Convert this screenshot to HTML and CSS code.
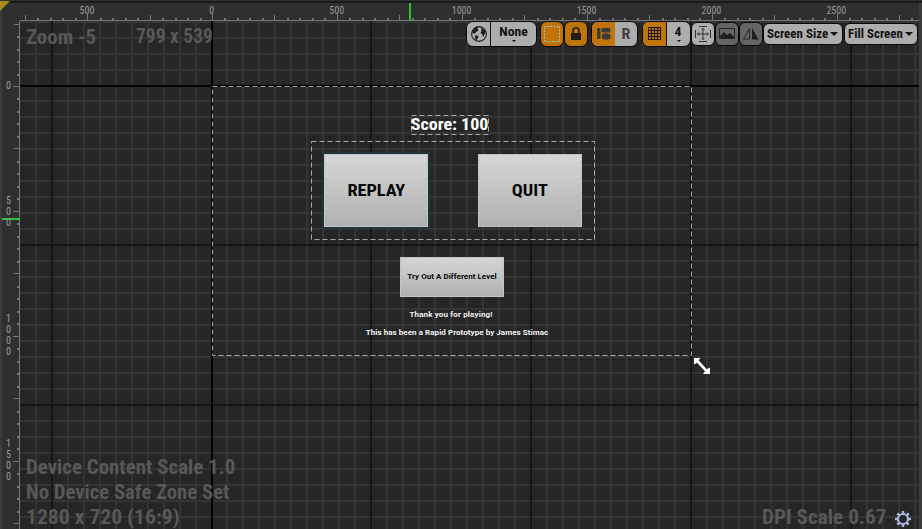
FILE: index.html
```html
<!DOCTYPE html>
<html lang="en">
<head>
<meta charset="utf-8">
<title>Widget Designer</title>
<link rel="stylesheet" href="styles.css">
</head>
<body>
<main class="designer">
  <svg class="surface" width="922" height="529" aria-hidden="true">
    <rect class="ground" width="922" height="529"/>
    <path class="cell-line" id="cells"/>
    <path class="block-line" id="blocks"/>
    <path class="origin" d="M211 21h2v508h-2zM20 85h902v2H20z"/>
    <path class="ruler" d="M0 0h922v20H20v509H0z"/>
    <path class="ruler-edge" d="M0 1h922v2H0z"/>
    <path class="ruler-side" d="M0 3h2v526H0z"/>
    <path class="tick" id="ticks"/>
    <path class="ruler-line" d="M20 20h899v1H20zM19 21h1v508h-1z"/>
    <path class="ruler-side" d="M919 3h3v526h-3z"/>
    <path class="corner" d="M0 1h10L0 11z"/>
    <path class="marker" d="M409 3h2v18h-2zM2 218h18v2H2z"/>
    <g class="outline">
      <rect x="212.5" y="86.5" width="479" height="269"/>
      <rect x="311.5" y="141.5" width="283" height="98"/>
      <rect x="411.5" y="115.5" width="77" height="19"/>
    </g>
  </svg>

  <div class="ruler-labels-x"><span>500</span><span>0</span><span>500</span><span>1000</span><span>1500</span><span>2000</span><span>2500</span></div>
  <div class="ruler-labels-y"><span>0</span><span>5<br>0<br>0</span><span>1<br>0<br>0<br>0</span><span>1<br>5<br>0<br>0</span></div>

  <div class="hud hud-zoom">Zoom -5</div>
  <div class="hud hud-pointer">799 x 539</div>
  <div class="hud hud-device"><div class="content-scale">Device Content Scale 1.0</div><div class="safe-zone">No Device Safe Zone Set</div><div class="resolution">1280 x 720 (16:9)</div></div>
  <div class="hud hud-dpi">DPI Scale 0.67</div>
  <svg class="gear" width="18" height="18" viewBox="-9 -9 18 18"><path class="teeth" d="M0-8V8M-8 0H8M-5.700-5.700 5.700 5.700M5.700-5.700-5.700 5.700"/><circle class="gear-body" r="5"/></svg>

  <nav class="toolbar">
    <div class="group locale">
      <button class="icon"><svg width="18" height="18" viewBox="0 0 18 18"><circle cx="9" cy="9" r="7.400" fill="#b0b0b0" stroke="#1c1c1c" stroke-width="1.100"/><path fill="#1c1c1c" d="M2.500 6 5 3 8.500 2 7.500 4 8.500 5.500 6 7 4.500 9 2.500 8zM5.500 10l3 1-.8 2.500L6 15.500 5 13zM11 3l3.500 2 1.300 3-1.500 1.500-1 3-1.300-3.500-1.500-1 1-2z"/></svg></button>
      <button class="pick"><span>None</span><i></i></button>
    </div>
    <button class="single on outline-btn"><svg width="18" height="18"><path d="M1.500 1.500h15v15h-15z" fill="none" stroke="#6e5420"/><path d="M1.500 1.500h15v15h-15z" fill="none" stroke="#d0c8a8" stroke-dasharray="2 1"/></svg></button>
    <button class="single on lock-btn"><svg width="14" height="16" viewBox="0 0 14 16"><path d="M4 8V5a3 3 0 0 1 6 0v3" fill="none" stroke="#201c14" stroke-width="1.600"/><path d="M2 7h10v7H2z" fill="#201c14"/></svg></button>
    <div class="group layout">
      <button class="icon on"><svg width="16" height="14" viewBox="0 0 16 14"><rect x="1" y="1" width="3.500" height="11" rx="1" fill="#3b3b38"/><rect x="5.500" y="1" width="9" height="4.500" rx="1.500" fill="#3b3b38"/><rect x="6" y="6.500" width="8.500" height="6" rx="2" fill="#3b3b38"/></svg></button>
      <button class="letter"><span>R</span></button>
    </div>
    <div class="group snap">
      <button class="icon on"><svg width="14" height="14"><path d="M.5.5h12v12H.5zM3.500.5v12M6.500.5v12M9.500.5v12M.5 3.500h12M.5 6.500h12M.5 9.500h12" fill="none" stroke="#17130a"/></svg></button>
      <button class="pick"><span>4</span><i></i></button>
    </div>
    <button class="small fit"><svg width="18" height="18" viewBox="0 0 18 18"><path d="M5 1.500h8M5 16.500h8M1.500 5v8M16.500 5v8M9 3.500v11M3.500 9h11M7.500 5 9 3.500 10.500 5M7.500 13 9 14.500l1.500-1.500M5 7.500 3.500 9 5 10.500M13 7.500 14.500 9 13 10.500" fill="none" stroke="#333"/></svg></button>
    <button class="small dim"><svg width="18" height="14" viewBox="0 0 18 14"><path d="M1.500 1.500h15v10h-15z" fill="none" stroke="#252525"/><path d="M2 11V9l4-4 3 3 3-2 4 4v1z" fill="#1d1d1d"/></svg></button>
    <button class="small dim"><svg width="18" height="14" viewBox="0 0 18 14"><path d="M7.500 1.500V12H1.500z" fill="none" stroke="#252525"/><path d="M10 1v11.500h6.500z" fill="#1d1d1d"/></svg></button>
    <button class="drop size"><span>Screen Size</span><i></i></button>
    <button class="drop fill"><span>Fill Screen</span><i></i></button>
  </nav>

  <section class="widget">
    <p class="score"><span>Score: 100</span></p>
    <div class="choices">
      <button class="tile selected"><span>REPLAY</span></button>
      <button class="tile"><span>QUIT</span></button>
    </div>
    <button class="tile level">Try Out A Different Level</button>
    <p class="note thanks">Thank you for playing!</p>
    <p class="note credit">This has been a Rapid Prototype by James Stimac</p>
  </section>
  <svg class="resize" width="18" height="18" viewBox="0 0 18 18"><path fill="#fff" d="M1 1h6.500L5.700 3.300 13.700 12.200 17 10.500v6.500h-7l2-2.700L4 5.800 1 7.500z"/></svg>
</main>
<script src="grid.js"></script>
</body>
</html>
```
FILE: grid.js
```js
// Draws the canvas grid and the ruler ticks on whole pixels.
const cells = [], blocks = [], ticks = [];
for (let k = -12; k <= 44; k++) {
  const x = Math.floor(212 + k * 15.98) - 1;
  const y = Math.floor(86 + k * 15.98) - 1;
  const list = k % 10 === 0 ? blocks : cells;
  if (x > 19 && x < 919) list.push(`M${x} 21h2v508h-2z`);
  if (y > 20 && y < 529) list.push(`M20 ${y}h899v2H20z`);
}
for (let k = -15; k <= 56; k++) {
  const x = Math.round(212 + k * 12.49);
  const y = Math.round(86 + k * 12.49);
  const size = k % 10 === 0 ? 6 : k % 5 === 0 ? 5 : 2;
  const thick = size === 2 ? 2 : 1;
  if (x > 22 && x < 917) ticks.push(`M${x} ${20 - size}h${thick}v${size}h-${thick}z`);
  if (y > 22 && y < 529) ticks.push(`M${19 - size} ${y}h${size}v${thick}h-${size}z`);
}
document.getElementById('cells').setAttribute('d', cells.join(''));
document.getElementById('blocks').setAttribute('d', blocks.join(''));
document.getElementById('ticks').setAttribute('d', ticks.join(''));
```
FILE: styles.css
```css
* { box-sizing: border-box; }
body { margin: 0; background: #262626; overflow: hidden; }
p { margin: 0; }
button { display: flex; align-items: center; justify-content: center; padding: 0; border: 0; font: inherit; color: inherit; background: none; }
svg { display: block; flex: none; }
.designer { position: relative; width: 922px; height: 529px; font-family: Roboto, "Liberation Sans", sans-serif; font-stretch: 75%; }
.surface { position: absolute; inset: 0; }
.ground { fill: #262626; }
.cell-line { fill: #343434; }
.block-line { fill: #161616; }
.origin { fill: #000; }
.ruler { fill: #2f2f2f; }
.ruler-edge { fill: #1b1b1b; }
.ruler-side { fill: #3c3c3c; }
.ruler-line, .tick { fill: #747474; }
.corner { fill: #a88a1c; }
.marker { fill: #2fbf35; }
.outline { fill: none; stroke: #a8a8a8; stroke-width: 1; stroke-dasharray: 5 3; }

.ruler-labels-x { position: absolute; top: 5px; left: 24.500px; display: grid; grid-template-columns: repeat(7, 124.900px); text-align: center; font-size: 10px; line-height: 12px; color: #999; }
.ruler-labels-y { position: absolute; top: 80px; left: 4px; width: 9px; display: grid; grid-template-rows: 115px 118px 125px auto; font-size: 10px; line-height: 11px; text-align: center; color: #999; }

.hud { position: absolute; font-size: 20px; line-height: 25px; font-weight: 700; color: #585858; white-space: nowrap; transform-origin: left; }
.hud-zoom { left: 26px; top: 25px; transform: scaleX(1.045); }
.hud-pointer { right: 709px; top: 24px; transform-origin: right; transform: scaleX(.975); }
.hud-device { left: 26px; top: 455px; }
.hud-device div { transform-origin: left; }
.content-scale { transform: scaleX(1.045); }
.safe-zone { transform: scaleX(1.035); }
.resolution { transform: scaleX(1.080); }
.hud-dpi { right: 36px; top: 505px; transform-origin: right; transform: scaleX(1.060); }
.gear { position: absolute; left: 894px; top: 510px; }
.teeth { stroke: #a9b5dc; stroke-width: 2.500; }
.gear-body { fill: #262626; stroke: #a9b5dc; stroke-width: 2.200; }

.toolbar { position: absolute; top: 21px; left: 466px; width: 454px; height: 26px; display: flex; align-items: center; color: #111; font-weight: 700; font-size: 12px; }
.group, .single, .small, .drop { border: 1px solid #080808; background: #adadad; flex: none; }
.group { display: flex; height: 26px; border-radius: 7px; overflow: hidden; }
.group > button { height: 24px; }
.group > .on, .single.on { background: #c07508; }
.locale { width: 71px; }
.locale .icon { width: 24px; border-right: 1px solid #111; }
.pick { flex: 1; flex-direction: column; justify-content: flex-start; padding-top: 3px; line-height: 15px; }
.pick span, .letter span { transform: scaleX(1.140); }
.pick i { border: 2px solid transparent; border-top-color: #111; }
.single { width: 24px; height: 26px; border-radius: 7px; }
.outline-btn { margin-left: 3px; }
.layout { width: 47px; margin-left: 3px; }
.layout .icon { width: 23px; }
.letter { flex: 1; color: #404040; font-size: 14px; }
.snap { width: 49px; margin-left: 4px; }
.snap .icon { width: 24px; border-right: 1px solid #111; }
.small { width: 24px; height: 24px; border-radius: 6px; }
.dim { background: #646464; }
.drop { height: 22px; border-radius: 6px; justify-content: space-between; padding: 0 4px 0 3px; white-space: nowrap; }
.drop span { transform-origin: left; transform: scaleX(1.080); }
.drop i { border: 4px solid transparent; border-top-color: #111; border-bottom: 0; }
.size { width: 80px; }
.fill { width: 74px; margin-left: 1px; }

.widget { position: absolute; left: 213px; top: 87px; width: 478px; height: 268px; }
.score { display: flex; justify-content: center; margin: 28px 0 0 198px; width: 78px; height: 20px; font-size: 16px; line-height: 20px; font-weight: 700; color: #fff; white-space: nowrap; }
.score span { transform: scaleX(1.125); }
.choices { display: flex; gap: 50px; margin: 19px 0 0 111px; }
.tile { width: 104px; height: 73px; background: linear-gradient(#d5d5d5, #b1b1b1); border: 1px solid #c4c4c4; color: #080808; font-size: 16px; font-weight: 700; white-space: nowrap; }
.tile span { transform: scaleX(1.140); }
.selected { box-shadow: 0 0 0 2px #203438; }
.level { width: 104px; height: 40px; margin: 30px 0 0 187px; padding-bottom: 2px; font-stretch: 100%; font-size: 8px; letter-spacing: .04px; }
.note { width: 190px; text-align: center; font-size: 8px; line-height: 12px; font-weight: 700; font-stretch: 100%; letter-spacing: .06px; color: #f2f2f2; white-space: nowrap; }
.thanks { margin: 12px 0 0 143px; letter-spacing: .15px; }
.credit { margin: 6px 0 0 149px; }
.resize { position: absolute; left: 693px; top: 357px; }
```
